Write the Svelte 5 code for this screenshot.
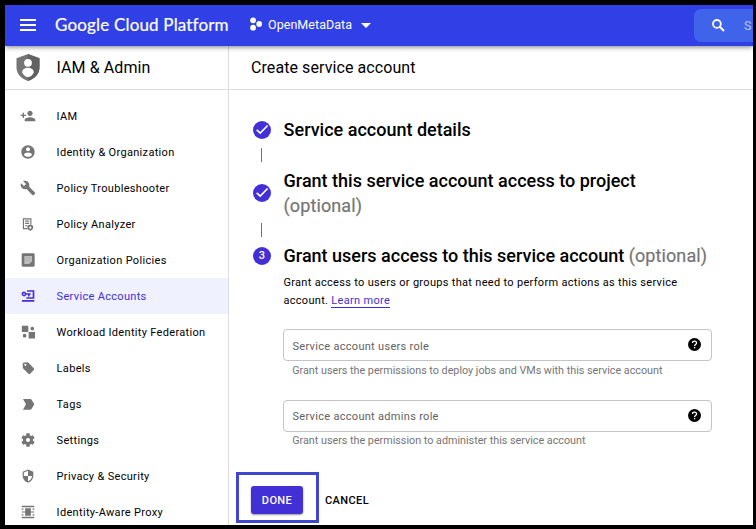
<script>
  const nav = [
    { id: 'iam', label: 'IAM' },
    { id: 'identity', label: 'Identity & Organization' },
    { id: 'wrench', label: 'Policy Troubleshooter' },
    { id: 'analyzer', label: 'Policy Analyzer', box: '-1 -2 28 28' },
    { id: 'policies', label: 'Organization Policies' },
    { id: 'service', label: 'Service Accounts', active: true },
    { id: 'workload', label: 'Workload Identity Federation', box: '-1.500 -1 26 26' },
    { id: 'label', label: 'Labels' },
    { id: 'tag', label: 'Tags' },
    { id: 'settings', label: 'Settings' },
    { id: 'security', label: 'Privacy & Security', box: '-1.500 -1.500 27 27' },
    { id: 'proxy', label: 'Identity-Aware Proxy', box: '-2 -2 28 28' }
  ];
  const paths = {
    iam: 'M15 12c2.210 0 4-1.790 4-4s-1.790-4-4-4-4 1.790-4 4 1.790 4 4 4zm-9-2V7H4v3H1v2h3v3h2v-3h3v-2H6zm9 4c-2.670 0-8 1.340-8 4v2h16v-2c0-2.660-5.330-4-8-4z',
    identity: 'M12 2C6.480 2 2 6.480 2 12s4.480 10 10 10 10-4.480 10-10S17.520 2 12 2zm0 3c1.660 0 3 1.340 3 3s-1.340 3-3 3-3-1.340-3-3 1.340-3 3-3zm0 14.200c-2.500 0-4.710-1.280-6-3.220.030-1.990 4-3.080 6-3.080 1.990 0 5.970 1.090 6 3.080-1.290 1.940-3.500 3.220-6 3.220z',
    wrench: 'M22.700 19l-9.100-9.100c.900-2.300.400-5-1.500-6.900-2-2-5-2.400-7.400-1.300L9 6 6 9 1.600 4.700C.400 7.100.900 10.100 2.900 12.100c1.900 1.900 4.600 2.400 6.900 1.500l9.100 9.100c.400.400 1 .400 1.400 0l2.300-2.300c.500-.400.500-1.100.100-1.400z',
    analyzer: 'M4 2h15v11h-2V4H6v15h6v2H4zM8 6h7v2H8zM8 10h7v2H8zM8 14h5v2H8zM17 13l5 2v3c0 3-2 4.500-5 6-3-1.500-5-3-5-6v-3zm0 3.500a2 2 0 1 0 0 4 2 2 0 0 0 0-4z',
    service: 'M6 5.200a3.700 3.700 0 1 0 3.400 5.100H12v2.400h2.500v-2.400H16V7.700H9.400A3.700 3.700 0 0 0 6 5.200zm0 2.500a1.300 1.300 0 1 1 0 2.600 1.300 1.300 0 0 1 0-2.600zM10.500 3.500H21.500V16H9.500V13.700H19V5.800H10.500zM3 18H21.500V20.700H3z',
    workload: 'M1.500 2H12v10H1.500zM12.500 12H23v10.500H12.500zM18.500 3.500a3 3 0 1 0 0 6 3 3 0 0 0 0-6zM6 15a3 3 0 1 0 0 6 3 3 0 0 0 0-6z',
    label: 'M4 6Q4 4 6 3.800L11 3.400Q12 3.300 12.800 4.200L20.700 12.500Q21.800 13.700 20.700 15L15.300 20.700Q14 21.800 12.700 20.700L4.800 12.700Q4.200 12 4.200 11zM8 5.700a1.600 1.600 0 1 0 0 3.200 1.600 1.600 0 0 0 0-3.200z',
    tag: 'M4.500 20.500l4.500-8-4.500-8H15.500c.800 0 1.300.300 1.700.900L21.500 12.500l-4.300 7.100c-.400.600-.900.900-1.700.900z',
    settings: 'M19.430 12.980c.040-.320.070-.640.070-.980s-.030-.660-.070-.980l2.110-1.650c.190-.150.240-.420.120-.640l-2-3.460c-.120-.220-.390-.300-.610-.220l-2.490 1c-.520-.400-1.080-.730-1.690-.980l-.380-2.650C14.460 2.180 14.250 2 14 2h-4c-.250 0-.460.180-.490.420l-.380 2.650c-.610.250-1.170.590-1.690.980l-2.490-1c-.230-.090-.490 0-.610.220l-2 3.460c-.130.220-.070.490.120.640l2.110 1.650c-.040.320-.070.650-.070.980s.030.660.070.980l-2.110 1.650c-.190.150-.240.420-.120.640l2 3.460c.120.220.390.300.610.220l2.490-1c.520.400 1.080.730 1.690.980l.380 2.650c.030.240.240.420.490.420h4c.250 0 .460-.180.490-.420l.380-2.650c.610-.250 1.170-.590 1.690-.980l2.490 1c.230.090.490 0 .610-.220l2-3.460c.120-.220.070-.490-.120-.640l-2.110-1.650zM12 15c-1.700 0-3-1.300-3-3s1.300-3 3-3 3 1.300 3 3-1.300 3-3 3z',
    security: 'M12 1L3 5v6c0 5.550 3.840 10.740 9 12 5.160-1.260 9-6.450 9-12V5l-9-4zm0 10.990h7c-.530 4.120-3.280 7.790-7 8.940V12H5V6.300l7-3.110v8.800z',
    proxy: 'M1 1h22v2.500H1zM1 20.500h22V23H1zM7 5.500h10v13H7zM1 6h3v2H1zM1 11h6v2H1zM1 16h3v2H1zM20 6h3v2h-3zM17 11h6v2h-6zM20 16h3v2h-3z'
  };
  const fields = [
    { label: 'Service account users role', hint: 'Grant users the permissions to deploy jobs and VMs with this service account' },
    { label: 'Service account admins role', hint: 'Grant users the permission to administer this service account' }
  ];
</script>

{#snippet check()}
  <svg class="dot" viewBox="0 0 18 18"><circle cx="9" cy="9" r="9" fill="#432fd6" /><path d="M3.700 8.800l3.500 3.300 7.400-7.600" fill="none" stroke="#fff" stroke-width="1.700" /></svg>
{/snippet}

<div class="frame">
  <header>
    <svg class="burger" viewBox="0 0 16 12"><path d="M0 1h16M0 6h16M0 11h16" stroke="#fff" stroke-width="1.800" /></svg>
    <div class="logo">Google Cloud Platform</div>
    <svg class="project" viewBox="0 0 12 14" fill="#fff"><circle cx="3.100" cy="3.300" r="2.900" /><circle cx="3.100" cy="10.700" r="2.900" /><circle cx="9.200" cy="7" r="2.900" /></svg>
    <span class="pname">OpenMetaData</span>
    <svg class="caret" viewBox="0 0 10 5"><path d="M0 0h10L5 5z" fill="#fff" /></svg>
    <div class="search">
      <svg viewBox="0 0 13 13"><circle cx="4.900" cy="4.900" r="3.900" fill="none" stroke="#fff" stroke-width="1.800" /><path d="M7.800 7.800l4.200 4.200" stroke="#fff" stroke-width="2.100" /></svg>
      <span>S</span>
    </div>
  </header>

  <div class="body">
    <aside>
      <div class="title">
        <svg viewBox="0 0 24 27"><path d="M12 0L23.500 4.300v9.200c0 6.300-4.700 11.200-11.500 13.500C5.200 24.700.500 19.800.500 13.500V4.300z" fill="#757575" /><path d="M12 0l11.500 4.300v9.200c0 6.300-4.700 11.200-11.500 13.500z" fill="#616161" /><circle cx="12" cy="8.800" r="3.900" fill="#fff" /><path d="M6.200 18.500c0-3.200 2.800-4.700 5.800-4.700s5.800 1.500 5.800 4.700c-1.200 2.500-3.200 4.400-5.800 4.800-2.600-.400-4.600-2.300-5.800-4.800z" fill="#fff" /></svg>
        <h1>IAM &amp; Admin</h1>
      </div>
      <nav>
        {#each nav as item}
          <div class="item" class:active={item.active}>
            <svg viewBox={item.box ?? '0 0 24 24'}>
              {#if item.id === 'policies'}
                <rect x="2.500" y="2" width="19.500" height="20" rx="2" fill="#757575" />
                <path d="M6.500 6h11.500v8l-4 4H6.500z" fill="#bdbdbd" /><path d="M8 9h8M8 12.500h8" stroke="#aaa" stroke-width="1" />
              {:else}
                <path d={paths[item.id]} fill="currentColor" fill-rule="evenodd" />
              {/if}
            </svg>
            <span>{item.label}</span>
          </div>
        {/each}
      </nav>
    </aside>

    <main>
      <div class="title"><h1>Create service account</h1></div>
      <div class="steps">
        <div class="step">{@render check()}<h2>Service account details</h2></div>
        <div class="line"></div>
        <div class="step">{@render check()}<h2>Grant this service account access to project<br /><span>(optional)</span></h2></div>
        <div class="line second"></div>
        <div class="step"><div class="dot num">3</div><h2>Grant users access to this service account <span>(optional)</span></h2></div>
        <div class="content">
          <p>Grant access to users or groups that need to perform actions as this service<br />account. <a href="#learn">Learn more</a></p>
          {#each fields as f}
            <div class="field">
              <div class="box">
                <span>{f.label}</span>
                <svg viewBox="0 0 24 24"><circle cx="12" cy="12" r="12" fill="#000" /><path d="M8.300 9.300C8.300 7 10 5.600 12.100 5.600s3.700 1.400 3.700 3.500c0 2.700-3.700 2.900-3.700 5.500" fill="none" stroke="#fff" stroke-width="2.400" /><path d="M10.900 16.500h2.500v2.500h-2.500z" fill="#fff" /></svg>
              </div>
              <div class="hint">{f.hint}</div>
            </div>
          {/each}
        </div>
      </div>
      <div class="actions">
        <div class="mark"><button class="done">DONE</button></div>
        <button class="cancel">CANCEL</button>
      </div>
    </main>
  </div>
</div>

<style>
  * { box-sizing: border-box; }
  .frame {
    width: 756px; height: 529px; overflow: hidden;
    border: solid #000; border-width: 5px 3px 4px 5px;
    background: #fff; color: #000;
    font-family: Roboto, sans-serif; font-size: 11px;
    display: flex; flex-direction: column;
  }
  svg { display: block; flex: none; }
  header {
    height: 41px; flex: none; background: #3140e6; color: #fff;
    display: flex; align-items: center; padding-left: 15px;
    box-shadow: 0 1px 5px rgba(0, 0, 0, .5); z-index: 1;
  }
  .burger { width: 16px; height: 12px; margin-top: -2px; }
  .logo { width: 214px; flex: none; padding-left: 19px; font: 17px/20px Lato, sans-serif; letter-spacing: .17px; -webkit-text-stroke: .2px #fff; white-space: nowrap; margin-top: -1px; }
  .project { width: 12px; height: 14px; margin-top: -3px; }
  .pname { width: 92px; margin-left: 6px; font-size: 12.500px; letter-spacing: .05px; margin-top: -2px; }
  .caret { width: 10px; height: 5px; margin-left: 1px; }
  .search {
    margin-left: auto; width: 59px; height: 33px; margin-top: -1px; background: #3f63e9;
    border-radius: 7px 0 0 7px; display: flex; align-items: center;
    padding-left: 17.500px; color: #b9c8f7; font-size: 12.500px;
  }
  .search svg { width: 13px; height: 13px; }
  .search span { margin-left: 19.500px; }
  .body { flex: 1; min-height: 0; display: flex; }
  aside { width: 224px; flex: none; border-right: 1px solid #dcdcdc; overflow: hidden; }
  .title { height: 44px; border-bottom: 1px solid #dcdcdc; display: flex; align-items: center; }
  aside .title { padding-left: 11px; }
  aside .title svg { width: 24px; height: 27px; }
  aside h1 { margin-left: 16.500px; }
  h1 { margin: 0; font-size: 16px; font-weight: 400; line-height: 20px; letter-spacing: .08px; }
  nav { padding-top: 8px; }
  .item { height: 36px; display: flex; align-items: center; padding-left: 15px; color: #757575; }
  .item svg { width: 16px; height: 16px; margin-top: -1px; }
  .item span { margin-left: 20.600px; color: #000; letter-spacing: .32px; white-space: nowrap; }
  .item.active { background: #eff1fe; color: #432fd6; }
  .item.active span { color: #432fd6; }
  main { flex: 1; min-width: 0; display: flex; flex-direction: column; }
  main .title { padding-left: 22px; flex: none; }
  .steps { padding: 27px 0 0 24px; }
  .step { display: flex; align-items: center; }
  .dot { width: 18px; height: 18px; flex: none; }
  .num { border-radius: 50%; background: #432fd6; color: #fff; font-size: 11px; font-weight: 500; line-height: 18px; text-align: center; }
  h2 { margin: 0 0 0 12.600px; font-size: 18px; line-height: 25px; font-weight: 500; white-space: nowrap; }
  h2 span { color: #757575; font-weight: 400; letter-spacing: .1px; -webkit-text-stroke: .2px #757575; }
  .line { width: 1px; height: 14px; background: #757575; margin: 6px 0 6px 8px; }
  .line.second { margin: 5px 0 6px 8px; }
  .content { padding-left: 30px; }
  p { margin: 6px 0 -1px; line-height: 18px; letter-spacing: .31px; white-space: nowrap; padding-left: .4px; }
  a { color: #432fd6; text-decoration: none; border-bottom: 1px solid #432fd6; }
  .field { margin-top: 20px; height: 51px; }
  .box { width: 429px; height: 32px; border: 1px solid #c4c4c4; border-radius: 4px; display: flex; align-items: center; justify-content: space-between; padding: 0 10.500px 0 8.500px; color: #616161; letter-spacing: .3px; }
  .field:nth-of-type(1) .box span { padding-top: 2px; }
  .box svg { width: 13px; height: 13px; margin-top: -1px; }
  .hint { padding: 2px 0 0 9.200px; line-height: 15px; color: #757575; font-size: 10.780px; }
  .field:nth-of-type(2) .hint { padding-top: 1px; }
  .actions { display: flex; align-items: center; margin: auto 0 2px 7px; }
  .mark { width: 83px; height: 51px; border: 3px solid #3f48cc; padding: 11px 0 0 12px; }
  button { border: 0; background: none; font: 500 11px/28px Roboto, sans-serif; letter-spacing: .4px; padding: 0; color: #000; height: 28px; display: block; }
  .done { width: 52px; padding-top: 1px; background: #432fd6; color: #fff; border-radius: 3px; box-shadow: 0 1px 2px rgba(0, 0, 0, .4); }
  .cancel { margin: 7px 0 0 6px; }
</style>
